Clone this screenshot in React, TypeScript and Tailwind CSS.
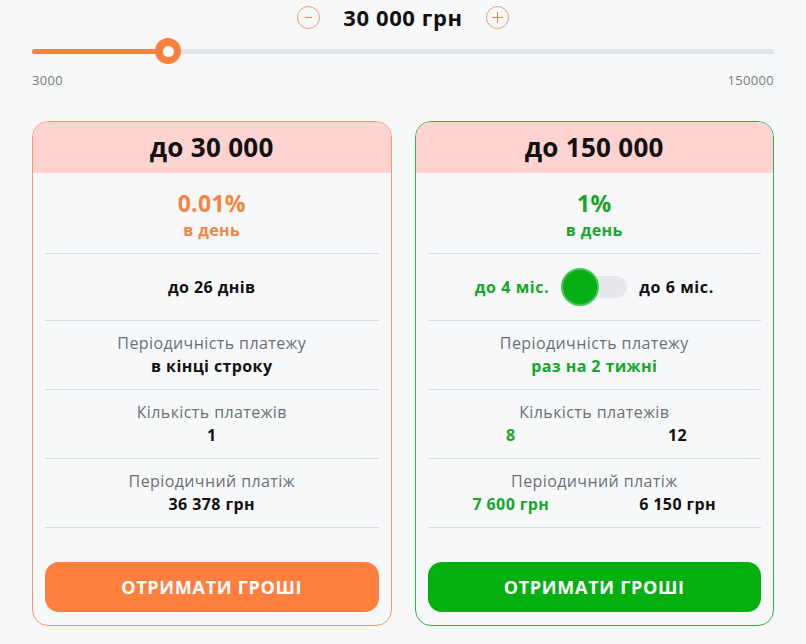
const ORANGE = "text-[#f5843f]";
const GREEN = "text-[#14a826]";
const VALUE = "text-[16px] font-bold leading-[23px] tracking-[0.4px]";

function Divider() {
  return <div className="h-px bg-[#d6d9de]" />;
}

function InfoRow({ label, children }: { label: string; children: React.ReactNode }) {
  return (
    <>
      <div className="pt-[10px] pb-[11px] text-center">
        <div className="text-[16px] leading-[24px] tracking-[0.4px] text-[#6b7076]">{label}</div>
        {children}
      </div>
      <Divider />
    </>
  );
}

function SplitValues({ a, b }: { a: string; b: string }) {
  return (
    <div className={`grid grid-cols-2 ${VALUE}`}>
      <span className={GREEN}>{a}</span>
      <span className="text-[#111]">{b}</span>
    </div>
  );
}

function Rate({ value, color }: { value: string; color: string }) {
  return (
    <div className={`pt-[17px] pb-[12px] text-center ${color}`}>
      <div className="text-[23px] font-bold leading-[26px] tracking-[0.3px]">{value}</div>
      <div className="mt-[3px] text-[16px] font-bold leading-[22px] tracking-[0.4px]">в день</div>
    </div>
  );
}

export default function App() {
  return (
    <div
      className="w-[806px] h-[644px] bg-[#f7f8fa] px-[32px] text-[#111]"
      style={{ fontFamily: '"Open Sans", "Liberation Sans", sans-serif' }}
    >
      {/* amount stepper */}
      <div className="h-[34px] flex items-center justify-center gap-[23px]">
        <button className="w-[23px] h-[23px] rounded-full border border-[#f29a6b] flex items-center justify-center">
          <span className="block w-[7px] h-px bg-[#f5843f]" />
        </button>
        <span className="text-[22px] font-bold leading-[26px] tracking-[0.6px]">30 000 грн</span>
        <button className="w-[23px] h-[23px] rounded-full border border-[#f29a6b] relative flex items-center justify-center">
          <span className="block w-[11px] h-px bg-[#f5843f]" />
          <span className="absolute w-px h-[11px] bg-[#f5843f]" />
        </button>
      </div>

      {/* slider */}
      <div className="relative mt-[4px] h-[26px] flex items-center">
        <div className="w-full h-[5px] rounded-full bg-[#e1e4e8]">
          <div className="w-[136px] h-full rounded-full bg-[#ff7f3f]" />
        </div>
        <div className="absolute left-[123px] top-0 w-[26px] h-[26px] rounded-full bg-[#ff7f3f] flex items-center justify-center">
          <div className="w-[11px] h-[11px] rounded-full bg-white" />
        </div>
      </div>
      <div className="mt-[8px] flex justify-between text-[13px] leading-[16px] tracking-[0.3px] text-[#777c82]">
        <span>3000</span>
        <span>150000</span>
      </div>

      {/* cards */}
      <div className="mt-[33px] grid grid-cols-2 gap-[23px]">
        {/* left card */}
        <div className="h-[505px] rounded-[16px] border border-[#f29a6b] overflow-hidden flex flex-col">
          <div className="h-[51px] bg-[#ffd3cf] flex items-center justify-center text-[26px] font-bold tracking-[0.3px]">
            до 30 000
          </div>
          <div className="px-[12px] flex-1 flex flex-col">
            <Rate value="0.01%" color={ORANGE} />
            <Divider />
            <div className="py-[22px] text-center text-[16px] font-bold leading-[22px] tracking-[0.4px]">до 26 днів</div>
            <Divider />
            <InfoRow label="Періодичність платежу">
              <div className={VALUE}>в кінці строку</div>
            </InfoRow>
            <InfoRow label="Кількість платежів">
              <div className={VALUE}>1</div>
            </InfoRow>
            <InfoRow label="Періодичний платіж">
              <div className={VALUE}>36 378 грн</div>
            </InfoRow>
            <button className="mt-[34px] h-[50px] rounded-[14px] bg-[#ff7f3f] text-white text-[18px] font-bold uppercase tracking-[0.7px]">
              Отримати гроші
            </button>
          </div>
        </div>

        {/* right card */}
        <div className="h-[505px] rounded-[16px] border border-[#3dae45] overflow-hidden flex flex-col">
          <div className="h-[51px] bg-[#ffd3cf] flex items-center justify-center text-[26px] font-bold tracking-[0.3px]">
            до 150 000
          </div>
          <div className="px-[12px] flex-1 flex flex-col">
            <Rate value="1%" color={GREEN} />
            <Divider />
            <div className="h-[66px] flex items-center justify-center gap-[12px] text-[16px] font-bold tracking-[0.6px]">
              <span className={GREEN}>до 4 міс.</span>
              <div className="relative w-[66px] h-[22px] rounded-full bg-[#e5e7ea]">
                <div className="absolute left-0 top-[-8px] w-[38px] h-[38px] rounded-full bg-[#06b014] border-2 border-[#45c65c]" />
              </div>
              <span>до 6 міс.</span>
            </div>
            <Divider />
            <InfoRow label="Періодичність платежу">
              <div className={`${VALUE} ${GREEN}`}>раз на 2 тижні</div>
            </InfoRow>
            <InfoRow label="Кількість платежів">
              <SplitValues a="8" b="12" />
            </InfoRow>
            <InfoRow label="Періодичний платіж">
              <SplitValues a="7 600 грн" b="6 150 грн" />
            </InfoRow>
            <button className="mt-[34px] h-[50px] rounded-[14px] bg-[#03b00f] text-white text-[18px] font-bold uppercase tracking-[0.7px]">
              Отримати гроші
            </button>
          </div>
        </div>
      </div>
    </div>
  );
}
